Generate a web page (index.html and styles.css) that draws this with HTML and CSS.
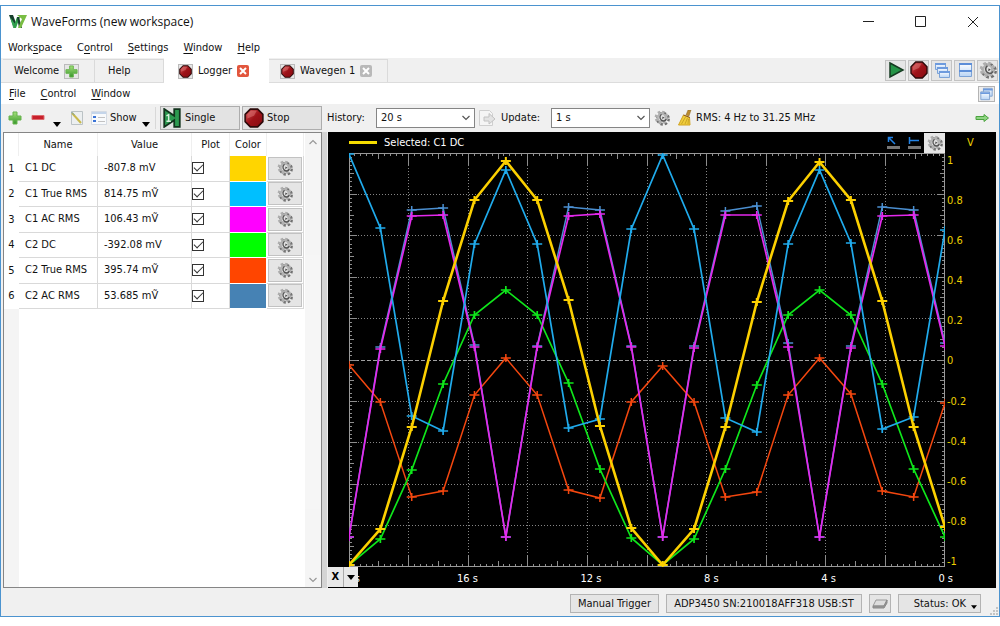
FILE: index.html
```html
<!DOCTYPE html>
<html lang="en">
<head>
<meta charset="utf-8">
<title>WaveForms (new workspace)</title>
<link rel="stylesheet" href="styles.css">
</head>
<body>
<svg class="sprite" aria-hidden="true">
  <defs>
    <linearGradient id="g-red" x1="0" y1="0" x2="1" y2="1"><stop offset="0" stop-color="#d2575a"/><stop offset=".5" stop-color="#9e1218"/><stop offset="1" stop-color="#860a10"/></linearGradient>
    <linearGradient id="g-green" x1="0" y1="0" x2="0" y2="1"><stop offset="0" stop-color="#a5e07a"/><stop offset="1" stop-color="#35962a"/></linearGradient>
    <linearGradient id="g-blue" x1="0" y1="0" x2="0" y2="1"><stop offset="0" stop-color="#fff"/><stop offset="1" stop-color="#b9d4f5"/></linearGradient>
  </defs>
  <symbol id="gear" viewBox="0 0 16 16">
    <circle cx="9" cy="8.800" r="5.600" fill="none" stroke="#6f6f6f" stroke-width="2.600" stroke-dasharray="2.400 1.998"/>
    <circle cx="7.500" cy="7.500" r="5.600" fill="none" stroke="#adadad" stroke-width="2.600" stroke-dasharray="2.400 1.998"/>
    <circle cx="7.700" cy="7.700" r="4" fill="#e4e4e4" stroke="#b2b2b2" stroke-width="2"/>
    <path d="M7.500 4.200c-2.500 2-2 6 2 6.800 1.500 0 2.500-.8 2.500-2" fill="none" stroke="#555" stroke-width="1.300"/>
    <path d="M8.500 6.500l2 1.300-2.300 1.200" fill="#444"/>
  </symbol>
  <symbol id="stop" viewBox="0 0 18 18">
    <path d="M5.700 1h6.600L17 5.700v6.600L12.300 17H5.700L1 12.300V5.700z" fill="url(#g-red)" stroke="#2c0a0a" stroke-width="1.400"/>
    <path d="M6 2.500h5.500L9 7l-6 2.500V5.700z" fill="#e98482" opacity=".45"/>
  </symbol>
  <symbol id="plus" viewBox="0 0 14 14">
    <path d="M5 1h4v4h4v4H9v4H5V9H1V5h4z" fill="url(#g-green)" stroke="#67b34c"/>
  </symbol>
  <symbol id="win" viewBox="0 0 16 16">
    <path d="M4.500 1.500h10v9h-10z" fill="url(#g-blue)" stroke="#7b9fce"/><path d="M4 2h11v2H4z" fill="#6d9add"/>
    <path d="M1.500 5.500h10v9h-10z" fill="url(#g-blue)" stroke="#7b9fce"/><path d="M1 6h11v2H1z" fill="#6d9add"/>
  </symbol>
  <symbol id="chev" viewBox="0 0 8 6"><path d="M.5 1L4 4.500 7.500 1" fill="none" stroke="#555" stroke-width="1.200"/></symbol>
  <symbol id="drop" viewBox="0 0 8 5"><path d="M0 0h8L4 5z" fill="#000"/></symbol>
</svg>

<div class="window">
  <header class="titlebar">
    <svg class="logo" viewBox="0 0 18 14"><path d="M0 0h4l3 8-2 5z" fill="#173f2d"/><path d="M4 13L8 2h3l-4 11z" fill="#2f9e4a"/><path d="M8 2h2l3 11h-3z" fill="#173f2d"/><path d="M8 0l10 0-6 13h-3l4-9z" fill="#79bd43"/><path d="M1 2l3 10 2-3z" fill="#33a653"/></svg>
    <h1 class="title">WaveForms (new workspace)</h1>
    <button class="caption" aria-label="Minimize"><svg viewBox="0 0 12 12"><path d="M0 5.500h11"/></svg></button>
    <button class="caption" aria-label="Maximize"><svg viewBox="0 0 12 12"><path d="M.5 .5h10v10H.5z"/></svg></button>
    <button class="caption" aria-label="Close"><svg viewBox="0 0 12 12"><path d="M1 1l10 10M11 1L1 11"/></svg></button>
  </header>
  <nav class="menu main-menu">
    <button>Work<u>s</u>pace</button><button>C<u>o</u>ntrol</button><button><u>S</u>ettings</button><button><u>W</u>indow</button><button><u>H</u>elp</button>
  </nav>
  <div class="tabbar">
    <div class="tab welcome"><button class="label">Welcome</button><button class="mini" aria-label="Add instrument"><svg><use href="#plus"/></svg></button></div>
    <div class="tab help"><button class="label">Help</button></div>
    <div class="tab logger active"><button class="mini" aria-label="Stop logger"><svg><use href="#stop"/></svg></button><button class="label">Logger</button><button class="shut hot" aria-label="Close logger"><svg viewBox="0 0 8 8"><path d="M1 1l6 6M7 1L1 7"/></svg></button></div>
    <div class="tab wavegen"><button class="mini" aria-label="Stop wavegen"><svg><use href="#stop"/></svg></button><button class="label">Wavegen 1</button><button class="shut" aria-label="Close wavegen"><svg viewBox="0 0 8 8"><path d="M1 1l6 6M7 1L1 7"/></svg></button></div>
    <div class="tab-tools">
      <button aria-label="Run all"><svg viewBox="0 0 18 18"><path d="M3 2l13 7-13 7z" fill="#259447" stroke="#153a20" stroke-width="1.500"/></svg></button>
      <button aria-label="Stop all"><svg><use href="#stop"/></svg></button>
      <button aria-label="Cascade"><svg viewBox="0 0 18 18"><g fill="url(#g-blue)" stroke="#7ba2d6"><path d="M2.500 2.500h10v6h-10z"/><path d="M4.500 6.500h10v6h-10z"/><path d="M6.500 10.500h10v6h-10z"/></g><path d="M2 2h11v2H2zM4 6h11v2H4zM6 10h11v2H6z" fill="#6d9add"/></svg></button>
      <button aria-label="Tile"><svg viewBox="0 0 18 18"><path d="M3.500 2.500h12v13h-12z" fill="url(#g-blue)" stroke="#7ba2d6"/><path d="M3 2h13v2H3zM3 9h13v2H3z" fill="#5d8ed8"/></svg></button>
      <button aria-label="Options"><svg><use href="#gear"/></svg></button>
    </div>
  </div>
  <nav class="menu sub-menu">
    <button><u>F</u>ile</button><button><u>C</u>ontrol</button><button><u>W</u>indow</button>
    <button class="undock" aria-label="Undock"><svg><use href="#win"/></svg></button>
  </nav>
  <div class="toolbar">
    <button class="flat add" aria-label="Add"><svg class="i14"><use href="#plus"/></svg></button>
    <button class="flat remove" aria-label="Remove"><svg class="i14" viewBox="0 0 14 14"><path d="M1 4.500h12v4H1z" fill="#c8202c" stroke="#dd6b6e"/></svg></button>
    <button class="flat more" aria-label="Remove options"><svg class="drop"><use href="#drop"/></svg></button>
    <button class="flat edit" aria-label="Edit"><svg class="i16" viewBox="0 0 16 16"><path d="M2.500 1.500h11v13h-11z" fill="#eceff0" stroke="#bbc2c5"/><path d="M3 3l9 10" stroke="#c9b94c" stroke-width="2"/><path d="M2.500 2l3 3" stroke="#7aa0a8"/></svg></button>
    <button class="flat show"><svg class="i16" viewBox="0 0 16 16"><path d="M.5 1.500h15v13H.5z" fill="#f8fafc" stroke="#d5dbe3"/><path d="M1 2h14v2H1z" fill="#c4d5ea"/><path d="M2 6h3v2H2zM2 10h3v2H2z" fill="#3a73d6"/><path d="M7 7.500h7M7 11.500h7" stroke="#c2c2c2"/></svg><span>Show</span><svg class="drop"><use href="#drop"/></svg></button>
    <span class="rule"></span>
    <button class="push"><svg class="i18" viewBox="0 0 18 18"><path d="M2 1l9 6V1h5v16h-5v-6l-9 6z" fill="#2c9a50" stroke="#12331d" stroke-width="1.600"/><path d="M4 7l2-1v6M4 12h4" fill="none" stroke="#d7efdc" stroke-width="1.300"/></svg>Single</button>
    <button class="push"><svg class="i18"><use href="#stop"/></svg>Stop</button>
    <label class="field-label history" for="history">History:</label>
    <span class="combo"><select id="history"><option>20 s</option></select><svg><use href="#chev"/></svg></span>
    <button class="flat page" aria-label="Next page"><svg viewBox="0 0 18 18"><path d="M1.500 1.500h10l3 3v12h-13z" fill="#f5f5f5" stroke="#cfcfcf"/><path d="M6 8h5V4.500L17 10l-6 5v-3H6z" fill="#e3e3e3" stroke="#c2c2c2"/></svg></button>
    <label class="field-label update" for="update">Update:</label>
    <span class="combo"><select id="update"><option>1 s</option></select><svg><use href="#chev"/></svg></span>
    <button class="flat cfg" aria-label="Update options"><svg class="i16"><use href="#gear"/></svg></button>
    <button class="flat clear" aria-label="Clear"><svg class="i16" viewBox="0 0 16 16"><path d="M11 0h3l-2 6-3-1z" fill="#b9892f" stroke="#8d6a26" stroke-width=".5"/><path d="M6.500 5l6 2.500.5 7.500H1.500z" fill="#f0cd3c" stroke="#d1a321"/><path d="M4.500 14l4-7M8 14l2.500-6M11 14l.5-5" stroke="#c09a22" stroke-width=".8"/><path d="M6.500 5l6.500 2.500" stroke="#8a5a24" stroke-width="1"/></svg></button>
    <span class="rms">RMS: 4 Hz to 31.25 MHz</span>
    <button class="flat expand" aria-label="Expand"><svg class="i14" viewBox="0 0 14 14"><path d="M1 5.500h8v-2L13.500 7 9 10.500v-2H1z" fill="#8fd483" stroke="#4ba33f"/></svg></button>
  </div>

  <main class="content">
    <section class="list">
      <table>
        <colgroup><col class="c-no"><col class="c-name"><col class="c-value"><col class="c-plot"><col class="c-color"><col class="c-set"></colgroup>
        <thead><tr><th></th><th>Name</th><th>Value</th><th>Plot</th><th>Color</th><th></th></tr></thead>
        <tbody>
          <tr><th>1</th><td>C1 DC</td><td>-807.8 mV</td><td class="tick"><input type="checkbox" aria-label="Plot C1 DC" checked></td><td class="sw gold"></td><td class="set"><button aria-label="C1 DC settings"><svg><use href="#gear"/></svg></button></td></tr>
          <tr><th>2</th><td>C1 True RMS</td><td>814.75 mṼ</td><td class="tick"><input type="checkbox" aria-label="Plot C1 True RMS" checked></td><td class="sw sky"></td><td class="set"><button aria-label="C1 True RMS settings"><svg><use href="#gear"/></svg></button></td></tr>
          <tr><th>3</th><td>C1 AC RMS</td><td>106.43 mṼ</td><td class="tick"><input type="checkbox" aria-label="Plot C1 AC RMS" checked></td><td class="sw magenta"></td><td class="set"><button aria-label="C1 AC RMS settings"><svg><use href="#gear"/></svg></button></td></tr>
          <tr><th>4</th><td>C2 DC</td><td>-392.08 mV</td><td class="tick"><input type="checkbox" aria-label="Plot C2 DC" checked></td><td class="sw lime"></td><td class="set"><button aria-label="C2 DC settings"><svg><use href="#gear"/></svg></button></td></tr>
          <tr><th>5</th><td>C2 True RMS</td><td>395.74 mṼ</td><td class="tick"><input type="checkbox" aria-label="Plot C2 True RMS" checked></td><td class="sw red"></td><td class="set"><button aria-label="C2 True RMS settings"><svg><use href="#gear"/></svg></button></td></tr>
          <tr><th>6</th><td>C2 AC RMS</td><td>53.685 mṼ</td><td class="tick"><input type="checkbox" aria-label="Plot C2 AC RMS" checked></td><td class="sw steel"></td><td class="set"><button aria-label="C2 AC RMS settings"><svg><use href="#gear"/></svg></button></td></tr>
        </tbody>
      </table>
      <div class="scroll"><svg class="up"><use href="#chev"/></svg><svg><use href="#chev"/></svg></div>
    </section>
    <div class="splitter"></div>
    <section class="scope">
      <div class="legend">
        <span class="line"></span><span>Selected: C1 DC</span>
        <div class="scope-tools">
          <button aria-label="Zoom cursor"><svg viewBox="0 0 14 14"><path d="M1 10h13v3H1z" fill="#777"/><path d="M3 2l6 6M2.500 6V1.500H7" fill="none" stroke="#2182e6" stroke-width="1.500"/></svg></button>
          <button aria-label="Level cursor"><svg viewBox="0 0 14 14"><path d="M1 10h13v3H1z" fill="#777"/><path d="M2.500 1v7M2.500 4.500H12" fill="none" stroke="#2182e6" stroke-width="1.500"/></svg></button>
          <button class="lit" aria-label="Plot options"><svg><use href="#gear"/></svg></button>
        </div>
        <span class="unit">V</span>
      </div>
      <div class="graph">
        <svg id="plot" viewBox="0 0 596 414" preserveAspectRatio="none" role="img" aria-label="Logger plot"></svg>
        <div class="y-axis"><span>1</span><span>0.8</span><span>0.6</span><span>0.4</span><span>0.2</span><span>0</span><span>-0.2</span><span>-0.4</span><span>-0.6</span><span>-0.8</span><span>-1</span></div>
      </div>
      <div class="x-axis">
        <div class="x-pick"><button>X</button><button aria-label="X menu"><svg class="drop"><use href="#drop"/></svg></button></div>
        <span class="x-cut">s</span>
        <div class="x-labels"><span>16 s</span><span>12 s</span><span>8 s</span><span>4 s</span><span>0 s</span></div>
      </div>
    </section>
  </main>

  <footer class="status">
    <button class="trigger">Manual Trigger</button>
    <button class="device">ADP3450 SN:210018AFF318 USB:ST</button>
    <button class="disk" aria-label="Device"><svg viewBox="0 0 18 14"><path d="M5 3h11l-3 6H2z" fill="#ddd" stroke="#999"/><path d="M2 9h11l3-6v3l-3 5H2z" fill="#999" stroke="#888"/></svg></button>
    <button class="state"><span>Status: OK</span><svg class="drop"><use href="#drop"/></svg></button>
    <svg class="grip" viewBox="0 0 10 10"><path d="M8 1h2v2H8zM8 4h2v2H8zM8 7h2v2H8zM5 4h2v2H5zM5 7h2v2H5zM2 7h2v2H2z" fill="#c4c4c4"/></svg>
  </footer>
</div>
<script src="plot.js"></script>
</body>
</html>
```

FILE: styles.css
```css
* { box-sizing: border-box; }
body {
  margin: 0;
  padding: 5px 0 9px;
  height: 100vh;
  background: #fff;
  color: #111;
  font: 11px/16px "DejaVu Sans Condensed", "Noto Sans", sans-serif;
}
button { font: inherit; color: inherit; margin: 0; padding: 0; border: 0; background: none; }
button svg { display: block; }
.sprite { position: absolute; width: 0; height: 0; }

.window {
  height: 100%;
  display: flex;
  flex-direction: column;
  border: 1px solid #4b93cf;
  background: #f0f0f0;
}

.titlebar { display: flex; align-items: center; height: 32px; padding-left: 8px; background: #fff; }
.logo { width: 18px; height: 14px; }
.title { flex: 1; margin: 0 0 0 4px; font: 12px/20px "Open Sans", sans-serif; }
.caption { width: 52px; height: 30px; display: grid; place-items: center; }
.caption svg { width: 12px; height: 12px; fill: none; stroke: #222; }

.menu { display: flex; align-items: center; background: #fff; }
.menu u { text-underline-offset: 2px; }
.main-menu { height: 20px; padding: 0 7px; gap: 15px; }
.sub-menu { height: 21px; padding: 0 4px 0 8px; gap: 15px; }
.undock { width: 17px; height: 16px; margin-left: auto; border: 1px solid #b4b4b4; background: #eee; }
.undock svg { width: 15px; height: 14px; }

.tabbar { display: flex; align-items: flex-end; height: 25px; padding: 0 1px 0 2px; border-bottom: 1px solid #dcdcdc; }
.tab { display: flex; align-items: center; height: 23px; border: 1px solid #dadada; border-bottom: 0; border-left: 0; background: #f0f0f0; gap: 5px; }
.tab.welcome { width: 92px; padding-left: 11px; }
.tab.help { width: 69px; padding-left: 13px; }
.tab.logger { width: 105px; padding-left: 14px; }
.tab.wavegen { width: 119px; padding-left: 11px; }
.tab.active { height: 25px; margin-bottom: -1px; border-color: #fff; background: #fff; }
.mini { width: 15px; height: 15px; border: 1px solid #bbb; background: #e6e6e6; }
.mini svg { width: 13px; height: 13px; }
.shut { width: 12px; height: 12px; border-radius: 2px; background: #b9b9b9; display: grid; place-items: center; }
.shut.hot { background: #e2563d; }
.shut svg { width: 8px; height: 8px; stroke: #fff; stroke-width: 2; }
.tab-tools { display: flex; gap: 2px; margin-left: auto; align-self: center; }
.tab-tools button { width: 21px; height: 21px; border: 1px solid #c3c3c3; background: #e6e6e6; display: grid; place-items: center; }
.tab-tools svg { width: 18px; height: 18px; }

.toolbar { display: flex; align-items: center; height: 28px; padding: 0 10px 0 7px; }
.flat { display: flex; align-items: center; flex: none; }
.i14 { width: 14px; height: 14px; }
.i16 { width: 16px; height: 16px; }
.i18 { width: 20px; height: 20px; }
.drop { width: 8px; height: 5px; margin-top: 12px; }
.add { width: 23px; }
.remove { width: 22px; }
.more { width: 16px; }
.edit { width: 22px; }
.show { width: 63px; gap: 3px; }
.show .drop { margin-left: auto; margin-right: 4px; }
.rule { width: 1px; height: 22px; margin: 0 4px 0 1px; background: #d8d8d8; }
.push { display: flex; align-items: center; gap: 3px; flex: none; width: 80px; height: 24px; margin-right: 2px; padding-left: 1px; border: 1px solid #adadad; background: #e3e3e3; }
.field-label { flex: none; }
.history { width: 52px; padding-left: 3px; }
.update { width: 50px; }
.combo { position: relative; flex: none; width: 99px; height: 20px; }
.combo select { width: 100%; height: 100%; padding: 0 4px; border: 1px solid #858585; border-radius: 0; background: #fff; color: inherit; font: inherit; appearance: none; }
.combo svg { position: absolute; right: 5px; top: 7px; width: 8px; height: 6px; pointer-events: none; }
.page { width: 26px; padding-left: 3px; }
.page svg { width: 18px; height: 18px; }
.cfg { width: 23px; padding-left: 4px; }
.clear { width: 23px; padding-left: 4px; }
.expand { margin-left: auto; }

.content { flex: 1; min-height: 0; display: flex; padding: 0 3px 0 2px; }
.list { width: 319px; display: flex; align-items: flex-start; border: 1px solid #858585; background: linear-gradient(to right, #f4f4f4 15px, #fff 15px); }
.list table { width: 300px; height: 176px; border-collapse: separate; border-spacing: 0; table-layout: fixed; }
.c-no { width: 15px; }
.c-name { width: 79px; }
.c-value { width: 94px; }
.c-plot { width: 38px; }
.c-color { width: 37px; }
.c-set { width: 37px; }
.list th, .list td { padding: 0; font-weight: normal; white-space: nowrap; }
.list thead th { height: 23px; background: #fff; border-right: 1px solid #efefef; text-align: center; }
.list tbody th { background: #fff; text-align: center; }
.list td { padding-left: 6px; border-right: 1px solid #d9d9d9; border-bottom: 1px solid #d9d9d9; }
.list td.tick { padding: 0; }
.list td.sw { border-bottom-color: #fff; border-right-color: #fff; }
.gold { background: #ffd500; }
.sky { background: #00bfff; }
.magenta { background: #f0f; }
.lime { background: #0f0; }
.red { background: #ff4500; }
.steel { background: #4682b4; }
.tick input { display: block; appearance: none; width: 12px; height: 12px; margin: 0; border: 1px solid #333; background: #fff; }
.tick input:checked::after { content: ""; display: block; width: 8px; height: 4px; margin: 1px; border: solid #333; border-width: 0 0 1px 1px; transform: rotate(-45deg); }
.list td.set { padding: 0 1px; }
.set button { display: grid; place-items: center; width: 100%; height: 23px; border: 1px solid #c2c2c2; background: #e5e5e5; }
.set svg { width: 16px; height: 16px; }
.scroll { flex: 1; align-self: stretch; display: flex; flex-direction: column; justify-content: space-between; align-items: center; padding: 6px 0 4px; margin-left: 1px; background: #f0f0f0; opacity: .6; }
.scroll svg { width: 8px; height: 6px; }
.up { transform: rotate(180deg); }
.splitter { width: 6px; background: #d4d4d4; border-right: 1px solid #eee; }

.scope { flex: 1; min-width: 0; display: flex; flex-direction: column; background: #000; color: #fff; }
.legend { display: flex; align-items: center; height: 21px; padding-left: 21px; }
.legend .line { width: 28px; height: 3px; margin-right: 7px; background: #f4dc00; }
.scope-tools { display: flex; margin-left: auto; }
.scope-tools button { width: 21px; height: 20px; display: grid; place-items: center; }
.scope-tools svg { width: 14px; height: 14px; }
.scope-tools .lit { background: #e6e6e6; }
.scope-tools .lit svg { width: 16px; height: 16px; }
.unit { width: 51px; padding-left: 22px; color: #ecd000; }
.graph { flex: 1; min-height: 0; display: flex; padding-left: 21px; }
#plot { flex: 1; min-width: 0; width: 100%; height: 100%; }
.y-axis { width: 51px; padding-left: 2px; margin-bottom: -3px; display: flex; flex-direction: column; justify-content: space-between; color: #ecd000; }
.x-axis { display: flex; height: 21px; margin-right: 43px; }
.x-pick { display: flex; width: 30px; height: 20px; background: #e8e8e8; color: #000; font-weight: bold; }
.x-pick button { flex: 1; display: grid; place-items: center; }
.x-pick button + button { border-left: 1px solid #aaa; }
.x-pick .drop { margin: 0; }
.x-cut { display: flex; justify-content: flex-end; width: 2px; margin-right: 97px; padding-top: 4px; overflow: hidden; }
.x-labels { flex: 1; display: flex; justify-content: space-between; padding-top: 4px; }

.status { display: flex; align-items: center; height: 28px; padding: 3px 1px 0 0; gap: 7px; }
.status button { height: 19px; flex: none; border: 1px solid #b3b3b3; background: #e5e5e5; white-space: nowrap; }
.trigger { width: 89px; margin-left: auto; }
.device { width: 196px; }
.disk { width: 22px; display: grid; place-items: center; }
.disk svg { width: 18px; height: 14px; }
.state { width: 83px; display: flex; align-items: center; justify-content: flex-end; gap: 5px; padding-right: 3px; }
.state .drop { margin-top: 7px; width: 6px; height: 4px; }
.grip { width: 10px; height: 10px; align-self: flex-end; }
```

FILE: plot.js
```js
const W = 596, H = 414, SAMPLES = 19;
const series = [
  { color: "#4b8fd0", width: 1.5, y: [384,194,57,55,192,384,193,54,57,193,384,193,58,53,190,384,193,54,57,190] },
  { color: "#f4470f", width: 1.5, y: [212,249,344,338,242,205,242,337,345,249,213,249,344,339,242,205,241,338,344,250] },
  { color: "#0fe61b", width: 1.7, y: [412,386,317,231,162,137,162,230,316,385,412,386,316,232,162,137,162,231,316,384] },
  { color: "#e429ec", width: 1.7, y: [384,196,63,62,194,384,194,63,61,194,384,195,62,62,194,384,195,63,62,193] },
  { color: "#20abec", width: 1.7, y: [1,75,263,278,91,17,91,275,266,76,2,76,265,279,91,17,90,276,264,77] },
  { color: "#fcd000", width: 2.6, y: [412,376,274,148,47,8,47,147,273,375,412,376,274,149,48,9,47,148,274,374] }
];
const svg = document.getElementById("plot");
function path(d, stroke, width, extra) {
  const p = document.createElementNS("http://www.w3.org/2000/svg", "path");
  p.setAttribute("d", d);
  p.setAttribute("fill", "none");
  p.setAttribute("stroke", stroke);
  p.setAttribute("stroke-width", width);
  if (extra) p.setAttribute("stroke-dasharray", extra);
  svg.appendChild(p);
}
const snap = v => Math.floor(v) + 0.5;

let grid = "", ticks = "";
for (let i = 1; i < 10; i++) {
  grid += `M${snap(i * W / 10)} 0V${H}`;
  if (i !== 5) grid += `M0 ${snap(i * H / 10)}H${W}`;
}
for (let i = 0; i <= 100; i++) {
  const x = Math.min(snap(i * W / 100), W - 0.5);
  const y = Math.min(snap(i * H / 100), H - 0.5);
  const tx = i % 10 === 0 ? 12 : i % 5 === 0 ? 6 : 3;
  const ty = i % 10 === 0 ? 8 : i % 5 === 0 ? 5 : 3;
  ticks += `M${x} 0v${tx}M${x} ${H}v-${tx}M0 ${y}h${ty}M${W} ${y}h-${ty}`;
}
path(grid, "#858585", 1, "1 2");
path(`M0 ${H / 2 + 0.5}H${W}`, "#a0a0a0", 1, "4 2");
path(ticks, "#8d8d8d", 1);
path(`M.5 .5H${W - 0.5}V${H - 0.5}H.5Z`, "#999", 1);

for (const s of series) {
  const pts = s.y.map((y, i) => [i * W / SAMPLES, y]);
  path("M" + pts.map(p => p.join(" ")).join("L"), s.color, s.width);
  path(pts.map(([x, y]) => `M${x - 5} ${y}h10M${x} ${y - 4}v8`).join(""), s.color, Math.min(s.width, 2));
}
```
